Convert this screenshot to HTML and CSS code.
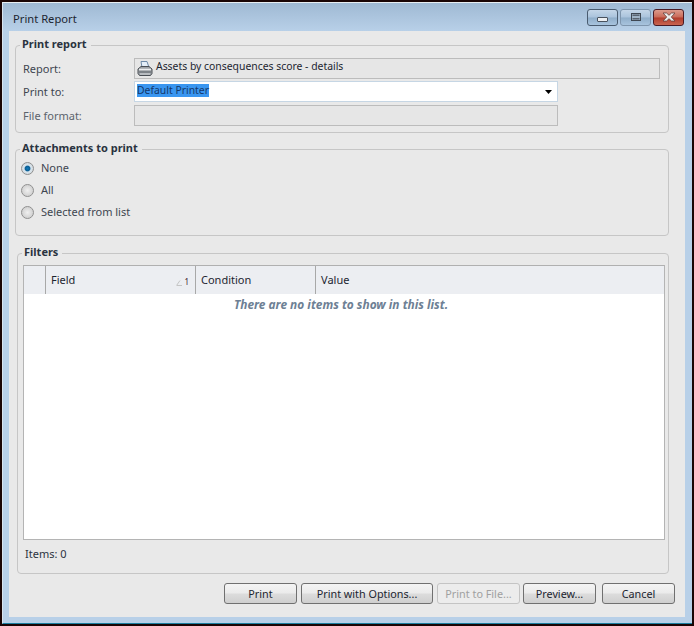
FILE: index.html
```html
<!DOCTYPE html>
<html lang="en">
<head>
<meta charset="utf-8">
<title>Print Report</title>
<link rel="stylesheet" href="styles.css">
</head>
<body>
<div class="window">
  <div class="titlebar">
    <span class="title">Print Report</span>
    <div class="caption-buttons">
      <div class="cap cap-min"><svg width="11" height="5" viewBox="0 0 11 5"><rect x="0.5" y="0.5" width="10" height="4" rx="0.5" fill="#eceff2" stroke="#49525e"/></svg></div>
      <div class="cap cap-max"><svg width="10" height="8" viewBox="0 0 10 8"><rect x="0.500" y="0.500" width="9" height="7" fill="#9fb3c6" stroke="#3f4853"/><rect x="1.500" y="1.500" width="7" height="1.500" fill="#59636f"/><rect x="1.500" y="5" width="7" height="1.500" fill="#59636f"/></svg></div>
      <div class="cap cap-close"><svg width="14" height="10" viewBox="0 0 14 10"><path d="M1 1h3.500L7 3.300 9.500 1H13L9.300 5 13 9H9.500L7 6.700 4.500 9H1l3.700-4z" fill="#ecebea" stroke="#63403c" stroke-width="0.8"/></svg></div>
    </div>
  </div>
  <div class="client">
    <fieldset class="group group-report">
      <legend>Print report</legend>
      <div class="form-row row-report">
        <label class="lbl">Report:</label>
        <div class="field field-report">
          <svg class="printer" width="16" height="16" viewBox="0 0 16 16">
            <path d="M4 0.500h6l2 6H5z" fill="#e4eef8" stroke="#6f8ba8" stroke-width="1"/>
            <path d="M1 8l3-2.500h8L15 8v4.500l-1.500 2h-11L1 12.500z" fill="#9ea3a8" stroke="#4a4f55" stroke-width="1"/>
            <path d="M2 8.500h12" stroke="#eceeef" stroke-width="1.500"/>
            <path d="M2 11h12" stroke="#5c6268" stroke-width="1"/>
            <path d="M3 13h10" stroke="#d4d7da" stroke-width="1"/>
          </svg>
          <span class="report-name">Assets by consequences score - details</span>
        </div>
      </div>
      <div class="form-row row-print">
        <label class="lbl">Print to:</label>
        <div class="field field-combo">
          <span class="selected">Default Printer</span>
          <svg class="combo-arrow" width="7" height="4" viewBox="0 0 7 4"><path d="M0 0h7L3.500 4z" fill="#000"/></svg>
        </div>
      </div>
      <div class="form-row row-format">
        <label class="lbl lbl-muted">File format:</label>
        <div class="field field-format"></div>
      </div>
    </fieldset>

    <fieldset class="group group-attach">
      <legend>Attachments to print</legend>
      <div class="radio-row"><span class="radio radio-on"></span><span class="radio-text">None</span></div>
      <div class="radio-row"><span class="radio"></span><span class="radio-text">All</span></div>
      <div class="radio-row"><span class="radio"></span><span class="radio-text">Selected from list</span></div>
    </fieldset>

    <fieldset class="group group-filters">
      <legend>Filters</legend>
      <div class="table">
        <div class="thead">
          <div class="th th-blank"></div>
          <div class="th th-field"><span>Field</span>
            <span class="sort"><svg width="6" height="6" viewBox="0 0 6 6"><path d="M0.500 5.500L4 0.500M1 5.500h5" stroke="#c4c4c4" fill="none"/></svg><span class="sort-num">1</span></span>
          </div>
          <div class="th th-cond">Condition</div>
          <div class="th th-value">Value</div>
        </div>
        <div class="empty">There are no items to show in this list.</div>
      </div>
      <div class="items">Items: 0</div>
    </fieldset>

    <div class="actions">
      <button class="btn btn-print">Print</button>
      <button class="btn btn-options">Print with Options...</button>
      <button class="btn btn-file" disabled>Print to File...</button>
      <button class="btn btn-preview">Preview...</button>
      <button class="btn btn-cancel">Cancel</button>
    </div>
  </div>
</div>
</body>
</html>
```

FILE: styles.css
```css
* { box-sizing: border-box; }
html, body { margin: 0; padding: 0; height: 100%; }
body {
  width: 694px;
  height: 626px;
  overflow: hidden;
  background: #1a0505;
  padding: 2px;
  font-family: "Noto Sans", sans-serif;
  font-size: 11px;
  color: #2c3440;
}
.window {
  width: 690px;
  height: 622px;
  display: flex;
  flex-direction: column;
  padding: 0 7px 6px 6px;
  background: #b8d0e8;
  border-top: 1px solid #e8eef2;
  border-left: 1px solid #d8e4ee;
  border-bottom: 1px solid #1b7fa0;
}
.titlebar {
  height: 28px;
  margin: 0 -7px 0 -6px;
  padding: 4px 8px 0 10px;
  display: flex;
  align-items: center;
  justify-content: space-between;
  background: linear-gradient(#9fb9d3, #b8d0e8);
  flex: none;
}
.title { font-size: 11.2px; color: #1c2530; padding-bottom: 2px; }
.caption-buttons { display: flex; gap: 2px; margin-top: -4px; }
.cap {
  width: 31px;
  height: 17px;
  border: 1px solid #4a5c70;
  border-radius: 3px;
  display: flex;
  align-items: center;
  justify-content: center;
  background: linear-gradient(#c4d6e8 0, #aac3dc 48%, #8fadc9 52%, #a8c4de 100%);
}
.cap-min svg { margin-top: 5px; }
.cap-max { border-color: #7f96ae; }
.cap-close {
  border-color: #4a1a24;
  background: linear-gradient(#dc9a8c 0, #c96a58 48%, #b23c2c 52%, #c86450 100%);
}
.client {
  flex: 1;
  background: #e9e9e9;
  padding: 7px 6px 0 6px;
  display: flex;
  flex-direction: column;
}
.group {
  margin: 0;
  border: 1px solid #c6c6c6;
  border-radius: 4px;
  padding: 0;
  min-width: 0;
  width: 654px;
  flex: none;
}
.group legend {
  font-weight: bold;
  font-size: 11px;
  color: #2a3340;
  padding: 0 4px 4px 2px;
  line-height: 11px;
}
.group-report { height: 95px; padding: 5px 8px 0 7px; }
.group-report legend { margin-left: -3px; }
.form-row { display: flex; align-items: center; }
.lbl { width: 111px; flex: none; color: #3e4650; }
.lbl-muted { color: #5c636c; }
.field {
  height: 21px;
  border: 1px solid #bcbcbc;
  background: #e6e6e6;
  display: flex;
  align-items: center;
}
.row-report { margin-bottom: 2px; }
.row-print { margin-bottom: 3px; }
.field-report { width: 526px; padding-left: 2px; gap: 3px; color: #1c2530; }
.report-name { font-size: 10.4px; padding-bottom: 5px; }
.printer { flex: none; }
.field-combo {
  width: 424px;
  background: #fff;
  border-color: #c6d6e4;
  padding: 0 5px 0 2px;
  justify-content: space-between;
  color: #1c2530;
}
.selected { background: #3a96f0; color: #15386a; margin-bottom: 2px; line-height: 13px; font-size: 10.4px; }
.field-format { width: 424px; }
.group-attach {
  height: 94px;
  margin-top: 9px;
  padding: 0 0 0 5px;
}
.group-attach legend { margin-left: -1px; }
.radio-row {
  height: 22px;
  display: flex;
  align-items: center;
  gap: 7px;
  color: #3e4650;
}
.radio-text { padding-bottom: 2px; }
.radio {
  width: 13px;
  height: 13px;
  border-radius: 50%;
  border: 1px solid #8f8f8f;
  background: radial-gradient(circle, #f0f0f0 0, #d4d4d4 65%, #f4f4f4 100%);
  flex: none;
}
.radio-on { background: radial-gradient(circle, #0f78b8 0, #0a5f96 30%, #d8e4ec 44%, #cfd3d6 100%); }
.group-filters {
  width: 652px;
  height: 328px;
  margin: 10px 0 0 2px;
  padding: 4px 3px 0 5px;
}
.group-filters legend { margin-left: -1px; }
.table {
  width: 642px;
  height: 275px;
  border: 1px solid #b4b4b4;
  border-top-color: #b0b0b0;
  background: #fff;
}
.thead { display: flex; height: 28px; background: #eceef2; color: #1c2530; }
.th {
  display: flex;
  align-items: center;
  padding-left: 5px;
  padding-bottom: 2px;
  border-right: 1px solid #a8a8a8;
  flex: none;
}
.th-blank { width: 22px; }
.th-field { width: 150px; justify-content: space-between; padding-right: 6px; }
.th-cond { width: 120px; }
.th-value { flex: 1; border-right: 0; }
.sort { display: flex; align-items: flex-end; gap: 2px; margin-top: 5px; }
.sort-num { font-size: 8px; line-height: 8px; color: #402030; }
.empty {
  text-align: center;
  font-style: italic;
  font-weight: bold;
  font-size: 11.9px;
  color: #6d8094;
  line-height: 13px;
  padding: 4px 6px 0 0;
}
.items { padding: 7px 0 0 2px; line-height: 13px; color: #2c3440; }
.actions { margin-top: 9px; display: flex; padding-left: 209px; }
.btn {
  height: 21px;
  margin: 0 4px 0 0;
  padding: 0 0 1px;
  border: 1px solid #707070;
  border-radius: 3px;
  background: linear-gradient(#f4f4f4 0, #ebebeb 48%, #dcdcdc 52%, #cfcfcf 100%);
  font-family: inherit;
  font-size: 10.8px;
  color: #1c2530;
}
.btn-print { width: 73px; }
.btn-options { width: 132px; }
.btn-file { width: 83px; margin-right: 3px; border-color: #c4c4c4; background: #ececec; color: #a0a0a0; }
.btn-preview { width: 73px; margin-right: 6px; }
.btn-cancel { width: 73px; margin-right: 0; }
```
